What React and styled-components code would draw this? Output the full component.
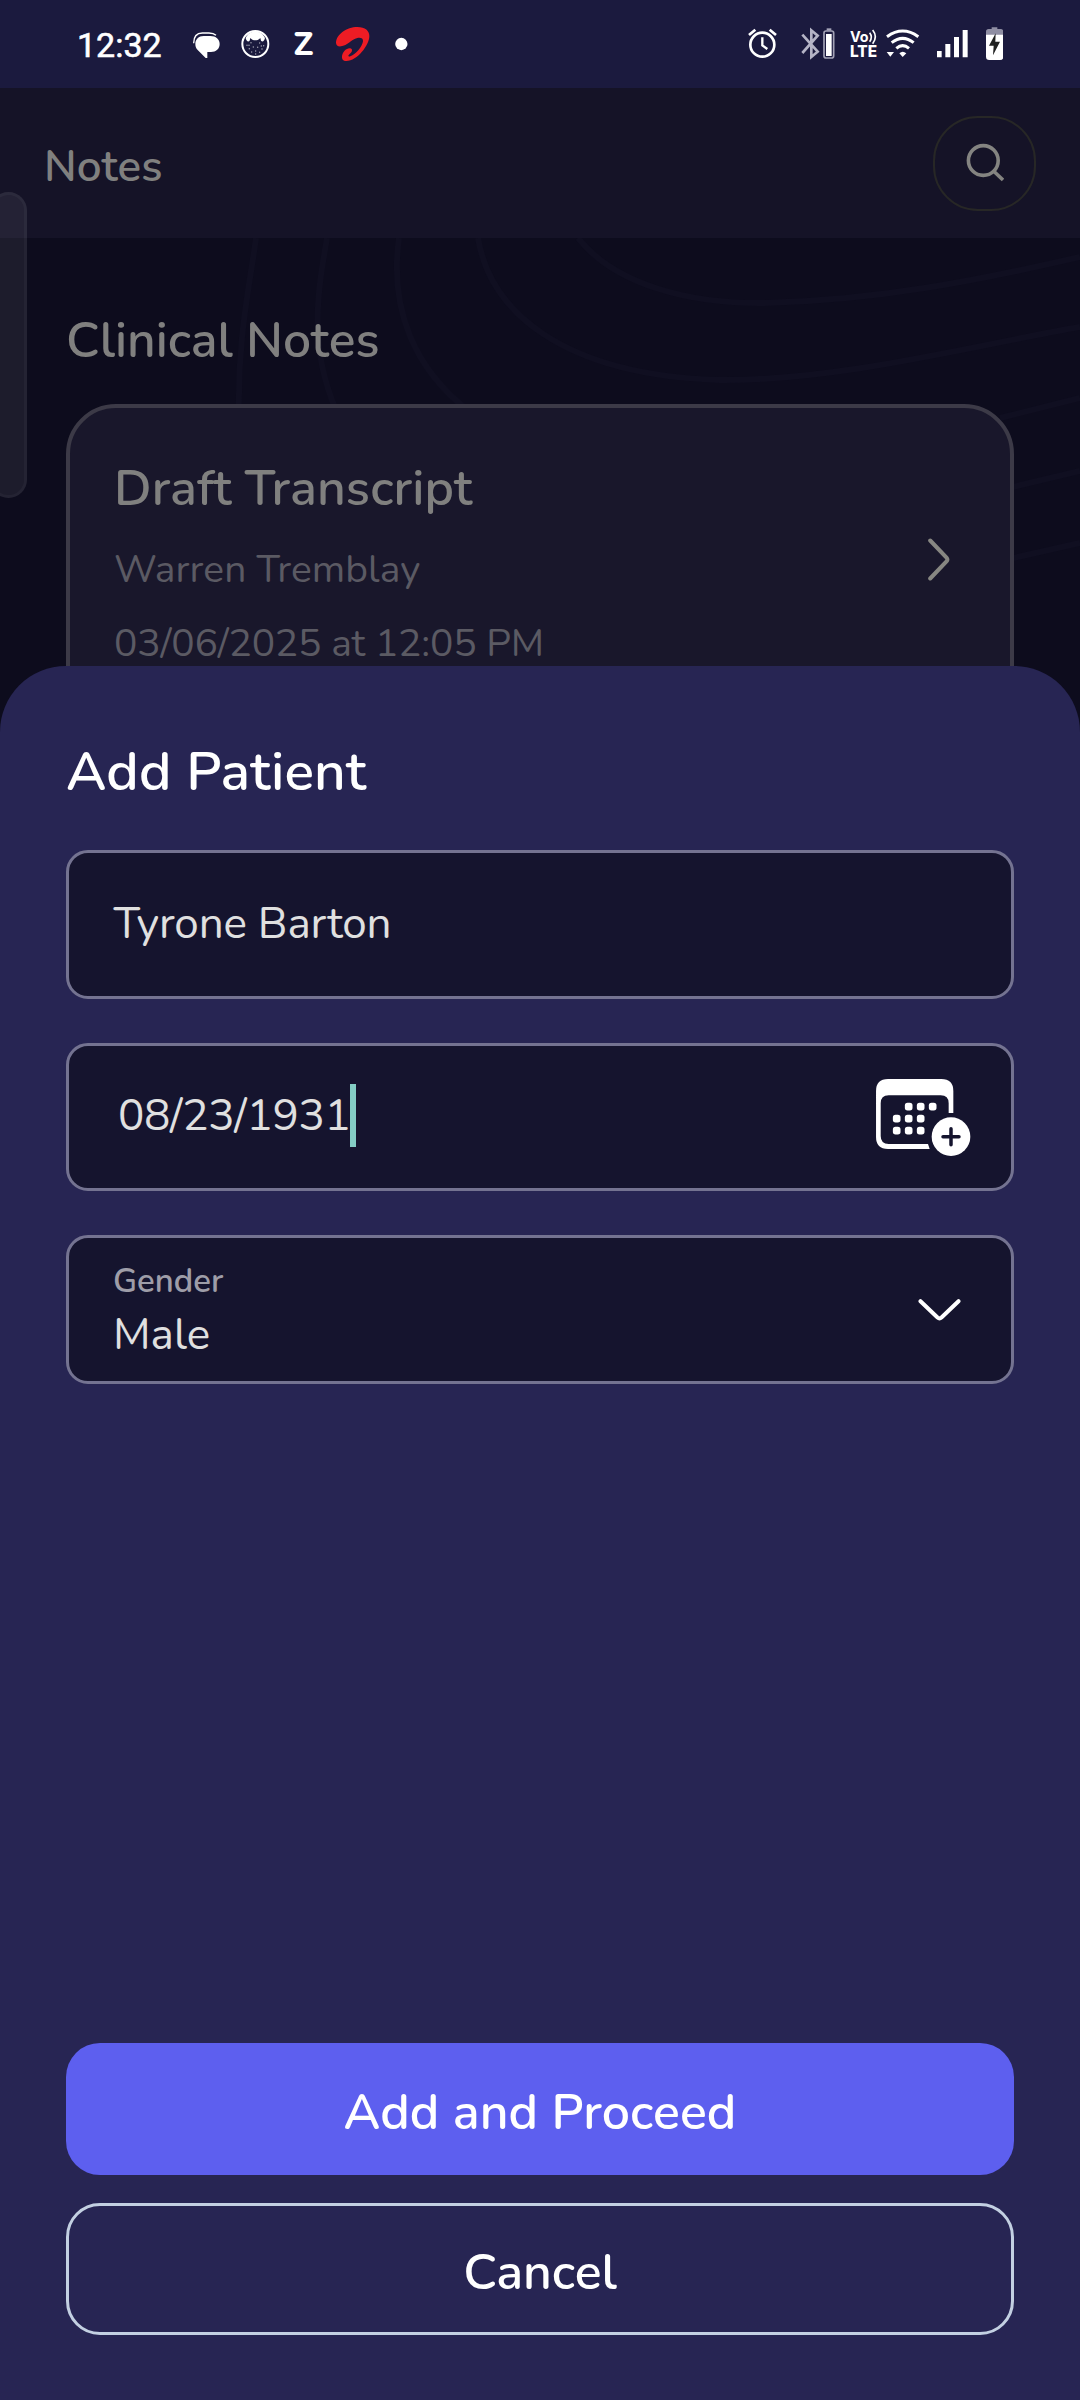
import React from "react";
import styled, { createGlobalStyle } from "styled-components";

const Global = createGlobalStyle`
  body { margin: 0; background: #0d0c1d; }
  * { box-sizing: border-box; }
`;

const Screen = styled.main`
  position: relative;
  width: 1080px;
  height: 2400px;
  overflow: hidden;
  display: flex;
  flex-direction: column;
  background: #0d0c1d;
  font-family: Nunito, Lato, sans-serif;
`;

const Label = styled.span`
  display: block;
  white-space: pre;
  color: ${(p) => p.$color || "#fff"};
  font-size: ${(p) => p.$size}px;
  font-weight: ${(p) => p.$weight || 400};
  line-height: ${(p) => p.$line || 60}px;
  letter-spacing: ${(p) => (p.$track ? `${p.$track}px` : "normal")};
`;

/* Status bar */
const StatusBar = styled.header`
  display: flex;
  justify-content: space-between;
  height: 88px;
  padding: 26px 77px 0 77px;
  background: #1b1a3e;
`;

const StatusGroup = styled.div`
  display: flex;
  align-items: flex-start;
`;

const Clock = styled.time`
  width: 116px;
  font: 400 34px/39px Roboto, sans-serif;
  -webkit-text-stroke: 0.6px #fff;
  color: #fff;
`;

const StatusSvg = styled.svg`
  display: block;
  height: 36px;
  width: ${(p) => p.$w / 3}px;
  margin-left: ${(p) => p.$gap || 0}px;
`;

function StatusIcon({ x, w, gap, children }) {
  return (
    <StatusSvg viewBox={`${x} 48 ${w} 108`} $w={w} $gap={gap} fill="#fff">
      {children}
    </StatusSvg>
  );
}

const ZMark = styled.span`
  width: 20px;
  margin-left: 23.6px;
  font: 800 32px/38px Nunito, Lato, sans-serif;
  color: #fff;
`;

/* App bar */
const AppBar = styled.div`
  display: flex;
  align-items: flex-start;
  justify-content: space-between;
  height: 149.5px;
  padding: 28px 44px 0 44px;
  background: #151327;
`;

const AppTitle = styled.div`
  padding-top: 21px;
`;

const SearchButton = styled.button`
  display: flex;
  align-items: center;
  justify-content: center;
  width: 103px;
  height: 95px;
  padding: 0 0 1px;
  border: 2px solid #272726;
  border-radius: 45px;
  background: transparent;
`;

/* Body behind the sheet */
const Body = styled.section`
  position: relative;
  flex: 1;
  padding: 73.5px 66px 0;
`;

const Waves = styled.svg`
  position: absolute;
  left: 0;
  top: 0;
`;

const BodyTitle = styled.div`
  position: relative;
  height: 93px;
`;

const NoteCard = styled.article`
  position: relative;
  display: flex;
  justify-content: space-between;
  align-items: flex-start;
  height: 340px;
  padding: 48px 60px 0 44px;
  border: 4px solid #3c3a47;
  border-radius: 50px;
  background: #19172b;
`;

const NoteText = styled.div`
  display: flex;
  flex-direction: column;
`;

const CardArrow = styled.svg`
  display: block;
  margin-top: 82px;
`;

const EdgeTab = styled.div`
  position: absolute;
  left: -10px;
  top: 192px;
  width: 37px;
  height: 306px;
  border: 3px solid rgba(255, 255, 255, 0.035);
  border-radius: 19px;
  background: rgba(255, 255, 255, 0.065);
`;

/* Bottom sheet */
const Sheet = styled.section`
  position: absolute;
  left: 0;
  right: 0;
  top: 666px;
  bottom: 0;
  display: flex;
  flex-direction: column;
  padding: 73px 66px 65px;
  border-radius: 66px 66px 0 0;
  background: #272553;
`;

const Fields = styled.div`
  display: flex;
  flex-direction: column;
  gap: 44px;
  margin-top: 45px;
`;

const Field = styled.div`
  display: flex;
  align-items: center;
  justify-content: space-between;
  height: 148.5px;
  padding: 0 ${(p) => p.$end}px 0 ${(p) => p.$start}px;
  border: 3px solid #747391;
  border-radius: 22px;
  background: #15142e;
`;

const Entry = styled.div`
  display: flex;
  align-items: flex-start;
  height: 66px;
  padding-top: 2.5px;
`;

const Caret = styled.i`
  width: 6px;
  height: 63px;
  margin: -2.5px 0 0 -1px;
  background: #84cdc5;
`;

const Stack = styled.div`
  display: flex;
  flex-direction: column;
  padding-top: 6px;
`;

const FieldIcon = styled.svg`
  display: block;
  margin-top: 1.5px;
`;

const Actions = styled.div`
  display: flex;
  flex-direction: column;
  gap: 28px;
  margin-top: auto;
`;

const ActionButton = styled.button`
  display: flex;
  align-items: center;
  justify-content: center;
  height: 132px;
  padding: 7px 0 0;
  border: ${(p) => (p.$primary ? "none" : "3px solid #c3d0e2")};
  border-radius: 34px;
  background: ${(p) => (p.$primary ? "#5d5fef" : "transparent")};
  font-family: inherit;
`;

const CALENDAR_DAYS = [
  [207, 200], [243, 200], [279, 200],
  [171, 236], [207, 236], [243, 236],
  [171, 272], [207, 272], [243, 272],
];

function CalendarAdd() {
  return (
    <FieldIcon width="94.7" height="77.3" viewBox="109 117 284 232" fill="#fff">
      <path
        fillRule="evenodd"
        d="M145 117H305Q341 117 341 153V219H327V190Q327 166 303 166H147Q123 166 123 190V288Q123 312 147 312H265L270 327H145Q109 327 109 291V153Q109 117 145 117Z"
      />
      {CALENDAR_DAYS.map(([x, y]) => (
        <rect key={`${x}-${y}`} x={x - 11.5} y={y - 11.5} width="23" height="23" rx="8" />
      ))}
      <circle cx="334" cy="290" r="58" />
      <path d="M334 266V314M310 290H358" stroke="#15142e" strokeWidth="10.5" strokeLinecap="round" />
    </FieldIcon>
  );
}

export default function App() {
  return (
    <Screen>
      <Global />
      <StatusBar>
        <StatusGroup>
          <Clock>12:32</Clock>
          <StatusIcon x={398} w={80}>
            <path d="M430 78H450C467 78 478 88 478 102C478 117 467 126 452 126H441V144H436L412 120C407 115 405 109 405 102C405 88 415 78 430 78Z" />
            <path d="M400 100C400 82 408 69 426 69H446C455 69 462 71 467 76" fill="none" stroke="#fff" strokeWidth="4" />
          </StatusIcon>
          <StatusIcon x={542} w={86} gap={21.5}>
            <circle cx="585" cy="102" r="39" fill="none" stroke="#fff" strokeWidth="6" />
            <path d="M556 84C562 70 572 65 585 65C598 65 608 70 614 84C612 94 606 97 602 92L600 84C594 90 590 91 585 91C580 91 576 90 570 84L568 92C564 97 558 94 556 84Z" />
            {[[560, 106], [572, 98], [598, 99], [610, 107], [567, 116], [579, 111], [592, 112], [605, 117], [574, 126], [586, 123], [598, 127], [586, 132], [566, 106], [603, 108]].map(([x, y]) => (
              <circle key={`${x}-${y}`} cx={x} cy={y} r="2.2" opacity="0.6" />
            ))}
          </StatusIcon>
          <ZMark>Z</ZMark>
          <StatusIcon x={828} w={102} gap={22.5}>
            <path
              fill="#ed1c24"
              d="M828 98C828 74 860 51 892 51C916 51 928 62 928 79C928 105 892 153 859 153C849 153 845 147 846 138C848 124 862 112 871 115C880 118 876 127 869 132C863 137 864 141 871 139C888 133 907 109 909 94C910 85 902 82 892 84C874 88 862 107 843 109C834 110 828 106 828 98Z"
            />
          </StatusIcon>
          <StatusIcon x={1004} w={38} gap={25.2}>
            <circle cx="1023" cy="102" r="18.5" />
          </StatusIcon>
        </StatusGroup>
        <StatusGroup>
          <StatusIcon x={54} w={88}>
            <g fill="none" stroke="#fff">
              <circle cx="97" cy="104" r="36" strokeWidth="8" />
              <path d="M97 82V106L112 117" strokeWidth="7" />
              <path d="M57 75L76 59M138 75L119 59" strokeWidth="8" />
            </g>
          </StatusIcon>
          <StatusIcon x={214} w={102} gap={24}>
            <path d="M218 74L264 125L245 141V61L264 77L218 129" fill="none" stroke="#b5b4c6" strokeWidth="8" />
            <rect x="283" y="63" width="29" height="81" rx="6" fill="none" stroke="#a3a2b6" strokeWidth="5" />
            <rect x="291" y="55" width="14" height="7" fill="#a3a2b6" />
            <rect x="289" y="72" width="17" height="66" />
          </StatusIcon>
          <StatusIcon x={362} w={82} gap={15.3}>
            <text x="362" y="97" fontFamily="Inter, sans-serif" fontWeight="700" fontSize="43" textLength="56" lengthAdjust="spacingAndGlyphs">Vo</text>
            <path d="M421 68Q431 81 421 95M430 60Q446 80 430 101" fill="none" stroke="#fff" strokeWidth="5" />
            <text x="362" y="141" fontFamily="Inter, sans-serif" fontWeight="800" fontSize="46" textLength="81" lengthAdjust="spacingAndGlyphs">LTE</text>
          </StatusIcon>
          <StatusIcon x={470} w={100} gap={8.7}>
            <g fill="none" stroke="#fff" strokeWidth="9">
              <path d="M473 80Q520 46 567 80" />
              <path d="M487 98Q520 72 553 98" />
              <path d="M501 115Q520 99 539 115" />
            </g>
            <path d="M472 126H494L483 140ZM510 130Q520 120 531 130L520 141Z" />
          </StatusIcon>
          <StatusIcon x={622} w={92} gap={17.3}>
            <path d="M622 123H636V142H622ZM647 102H662V142H647ZM673 81H688V142H673ZM699 60H714V142H699Z" />
          </StatusIcon>
          <StatusIcon x={768} w={52} gap={18}>
            <path d="M785 52H802V57H812Q820 57 820 65V80H768V65Q768 57 776 57H785Z" fill="#8f8ea3" />
            <path d="M768 74H820V140Q820 150 810 150H778Q768 150 768 140Z" />
            <path d="M797 70L777 107H791L789 136L810 95H796Z" fill="#1f2020" />
          </StatusIcon>
        </StatusGroup>
      </StatusBar>

      <AppBar>
        <AppTitle>
          <Label $size={44} $weight={600} $track={0.1} $color="#80807f">Notes</Label>
        </AppTitle>
        <SearchButton aria-label="Search">
          <svg width="38" height="40" viewBox="0 0 38 40" fill="none" stroke="#848481" strokeWidth="3.6">
            <circle cx="17.3" cy="17.5" r="14.9" />
            <path d="M27.5 28L37 37" />
          </svg>
        </SearchButton>
      </AppBar>

      <Body>
        <Waves width="1080" height="430" viewBox="0 238 1080 430" fill="none" stroke="#100f21" strokeWidth="6">
          <path d="M256 238C249 290 237 340 239 420" />
          <path d="M327 238C318 290 308 345 336 410" />
          <path d="M399 238C389 310 415 370 470 412" />
          <path d="M478 238C490 310 560 375 720 380C840 381 980 344 1080 327" />
          <path d="M578 238C615 285 690 304 765 303C880 300 980 280 1080 257" />
          <path d="M1080 398L1000 418M1080 471L1000 490M1080 543L1000 561" />
        </Waves>
        <BodyTitle>
          <Label $size={49.8} $weight={600} $color="#80807f">Clinical Notes</Label>
        </BodyTitle>
        <NoteCard>
          <NoteText>
            <Label $size={50} $line={66} $weight={600} $track={0.08} $color="#80807f">Draft Transcript</Label>
            <Label $size={39} $line={95} $track={0.08} $color="#5b5a63">Warren Tremblay</Label>
            <Label $size={39} $line={54} $track={-0.2} $color="#5b5a63">03/06/2025 at 12:05 PM</Label>
          </NoteText>
          <CardArrow width="22" height="43" viewBox="0 0 22 43" fill="none" stroke="#878782" strokeWidth="4" strokeLinecap="round">
            <path d="M2.2 2.5L18.5 19.5Q20.2 21.5 18.5 23.5L2.2 40.5" />
          </CardArrow>
        </NoteCard>
      </Body>

      <EdgeTab />

      <Sheet role="dialog">
        <Label $size={55} $line={66} $weight={600} $track={0.15}>Add Patient</Label>
        <Fields>
          <Field $start={44.5} $end={40}>
            <Label $size={44} $track={-0.18} $color="#e0e0e0">Tyrone Barton</Label>
          </Field>
          <Field $start={49} $end={40}>
            <Entry>
              <Label $size={44} $track={-0.35} $color="#e0e0e0">08/23/1931</Label>
              <Caret />
            </Entry>
            <CalendarAdd />
          </Field>
          <Field $start={44} $end={50}>
            <Stack>
              <Label $size={33} $line={46} $weight={600} $color="#9e9da8">Gender</Label>
              <Label $size={44} $line={60} $color="#e0e0e0">Male</Label>
            </Stack>
            <FieldIcon width="43" height="22" viewBox="0 0 43 22" fill="none" stroke="#fff" strokeWidth="4" strokeLinecap="round">
              <path d="M2.5 2.2L19.5 18.5Q21.5 20.2 23.5 18.5L40.5 2.2" />
            </FieldIcon>
          </Field>
        </Fields>
        <Actions>
          <ActionButton $primary>
            <Label $size={50} $weight={600} $track={0.1}>Add and Proceed</Label>
          </ActionButton>
          <ActionButton>
            <Label $size={50} $weight={600}>Cancel</Label>
          </ActionButton>
        </Actions>
      </Sheet>
    </Screen>
  );
}
